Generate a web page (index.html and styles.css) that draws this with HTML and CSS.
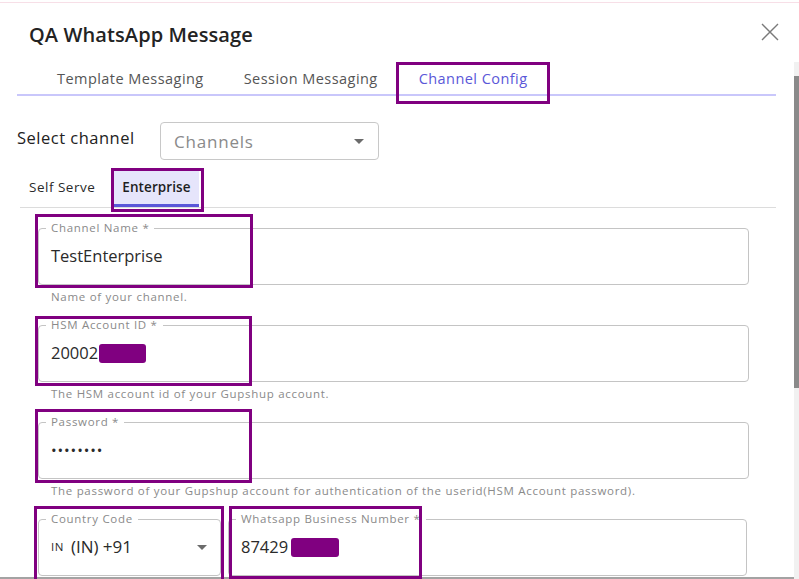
FILE: index.html
```html
<!DOCTYPE html>
<html lang="en">
<head>
<meta charset="utf-8">
<title>QA WhatsApp Message</title>
<link rel="stylesheet" href="styles.css">
</head>
<body>
<div class="topline"></div>
<div class="modal">
  <header class="head">
    <h1 class="title">QA WhatsApp Message</h1>
    <button class="close" aria-label="Close">
      <svg width="18" height="18" viewBox="0 0 18 18"><path d="M1 1 L17 17 M17 1 L1 17" stroke="#7a7a7a" stroke-width="1.4" fill="none"/></svg>
    </button>
  </header>
  <div class="body">
    <div class="content">
      <nav class="tabs">
        <span class="tab">Template Messaging</span>
        <span class="tab">Session Messaging</span>
        <span class="tab active">Channel Config</span>
      </nav>
      <div class="select-row">
        <label class="select-label">Select channel</label>
        <div class="select">
          <span class="placeholder">Channels</span>
          <span class="caret"></span>
        </div>
      </div>
      <div class="subtabs">
        <span class="subtab">Self Serve</span>
        <span class="subtab on">Enterprise</span>
      </div>
      <div class="fields">
        <div class="field">
          <fieldset class="box">
            <legend>Channel Name *</legend>
            <div class="value">TestEnterprise</div>
          </fieldset>
          <p class="help">Name of your channel.</p>
        </div>
        <div class="field">
          <fieldset class="box">
            <legend>HSM Account ID *</legend>
            <div class="value">20002<span class="redact"></span></div>
          </fieldset>
          <p class="help">The HSM account id of your Gupshup account.</p>
        </div>
        <div class="field">
          <fieldset class="box">
            <legend>Password *</legend>
            <div class="value dots">••••••••</div>
          </fieldset>
          <p class="help">The password of your Gupshup account for authentication of the userid(HSM Account password).</p>
        </div>
        <div class="field-row">
          <fieldset class="box country">
            <legend>Country Code</legend>
            <div class="value"><span class="flag">IN</span>(IN) +91<span class="caret small"></span></div>
          </fieldset>
          <fieldset class="box number">
            <legend>Whatsapp Business Number *</legend>
            <div class="value">87429<span class="redact wide"></span></div>
          </fieldset>
        </div>
      </div>
    </div>
    <div class="scroll"><div class="thumb"></div></div>
  </div>
  <div class="bottombar"></div>
</div>
<div class="marks">
  <div class="mark m-config"></div>
  <div class="mark m-enterprise"></div>
  <div class="mark m-name"></div>
  <div class="mark m-hsm"></div>
  <div class="mark m-pass"></div>
  <div class="mark m-country"></div>
  <div class="mark m-number"></div>
</div>
</body>
</html>
```
FILE: styles.css
```css
* { box-sizing: border-box; }
html, body { margin: 0; padding: 0; }
body {
  width: 799px;
  height: 579px;
  overflow: hidden;
  position: relative;
  background: #fff;
  font-family: "Open Sans", "Noto Sans", sans-serif;
  color: #222;
}
.topline {
  height: 3px;
  border-bottom: 1px solid #f7dfe7;
}
.modal {
  height: 576px;
  display: flex;
  flex-direction: column;
}
.head {
  height: 59px;
  flex: none;
  display: flex;
  justify-content: space-between;
  padding: 0 20px 0 29px;
}
.title {
  margin: 0;
  padding-top: 19px;
  font-size: 20px;
  font-weight: 600;
  line-height: 26px;
  color: #232323;
  letter-spacing: 0.1px;
}
.close {
  border: 0;
  background: none;
  padding: 0;
  margin-top: 20px;
  width: 18px;
  height: 18px;
}
.body {
  flex: 1;
  display: flex;
  min-height: 0;
}
.content {
  width: 759px;
  margin-left: 17px;
  overflow: hidden;
}
.scroll {
  width: 5px;
  margin-left: 18px;
  background: #f1f1f1;
  padding-top: 14px;
}
.thumb {
  height: 312px;
  background: #8a8a8a;
}
.tabs {
  height: 34px;
  display: flex;
  align-items: center;
  padding-left: 20px;
  border-bottom: 2px solid #c9c7fb;
}
.tab {
  padding: 0 20px;
  font-size: 14.5px;
  letter-spacing: 0.45px;
  color: #555;
}
.tab.active { color: #5a57d8; padding: 0 21px; }
.select-row {
  display: flex;
  align-items: flex-start;
  margin-top: 26px;
}
.select-label {
  width: 143px;
  padding-top: 6px;
  line-height: 20px;
  font-size: 16.5px;
  letter-spacing: 0.5px;
  color: #222;
}
.select {
  width: 219px;
  height: 38px;
  border: 1px solid #c8c8c8;
  border-radius: 4px;
  display: flex;
  align-items: center;
  justify-content: space-between;
  padding: 0 14px 0 13px;
}
.placeholder { font-size: 17px; letter-spacing: 0.8px; color: #8a8a8a; }
.caret {
  width: 0; height: 0;
  border-left: 5px solid transparent;
  border-right: 5px solid transparent;
  border-top: 5px solid #6b6b6b;
}
.subtabs {
  display: flex;
  gap: 11px;
  height: 40px;
  margin-top: 8px;
  margin-left: 3px;
  padding-left: 1px;
  border-bottom: 1px solid #dcdcdc;
  align-items: flex-end;
}
.subtab {
  height: 37px;
  display: flex;
  align-items: center;
  padding: 0 8px;
  font-size: 13.5px;
  letter-spacing: 0.5px;
  color: #2a2a2a;
  border-bottom: 3px solid transparent;
}
.subtab.on {
  background: #e6e5fb;
  border-bottom-color: #5a57d8;
  font-weight: 600;
  letter-spacing: 0.1px;
  color: #1e1e1e;
}
.fields {
  padding: 13px 27px 0 21px;
}
.box {
  margin: 0;
  border: 1px solid #c4c4c4;
  border-radius: 4px;
  padding: 0 12px 18px;
  min-width: 0;
}
.box legend {
  font-size: 11.5px;
  line-height: 14px;
  letter-spacing: 0.7px;
  color: #8a8a8a;
  padding: 0 5px;
  margin-left: -5px;
}
.value {
  margin-top: 11px;
  font-size: 16.5px;
  line-height: 20px;
  color: #2a2a2a;
  display: flex;
  align-items: center;
}
.dots { letter-spacing: 0.9px; font-size: 15px; }
.redact {
  display: inline-block;
  width: 47px;
  height: 19px;
  background: #800080;
  border-radius: 3px;
  margin-left: 1px;
}
.redact.wide { width: 48px; margin-left: 3px; }
.help {
  margin: 5px 0 14px 13px;
  font-size: 11.5px;
  line-height: 14px;
  letter-spacing: 0.7px;
  color: #8a8a8a;
}
.field-row {
  display: flex;
  gap: 7px;
}
.country { width: 183px; flex: none; }
.number { flex: 1; margin-right: 2px; }
.flag { font-size: 11.5px; margin-right: 7px; letter-spacing: 0.5px; }
.country .value { font-size: 17px; }
.caret.small { margin-left: auto; margin-right: 1px; }
.bottombar {
  position: absolute;
  left: 0;
  bottom: 0;
  width: 794px;
  height: 2px;
  background: #a3a3a3;
}
.mark {
  position: absolute;
  border: 3px solid #800080;
}
.m-config { left: 396px; top: 62px; width: 154px; height: 42px; }
.m-enterprise { left: 111px; top: 168px; width: 93px; height: 44px; }
.m-name { left: 35px; top: 214px; width: 218px; height: 74px; }
.m-hsm { left: 35px; top: 316px; width: 217px; height: 70px; }
.m-pass { left: 35px; top: 409px; width: 217px; height: 74px; }
.m-country { left: 34px; top: 506px; width: 190px; height: 76px; }
.m-number { left: 229px; top: 506px; width: 193px; height: 73px; }
```
